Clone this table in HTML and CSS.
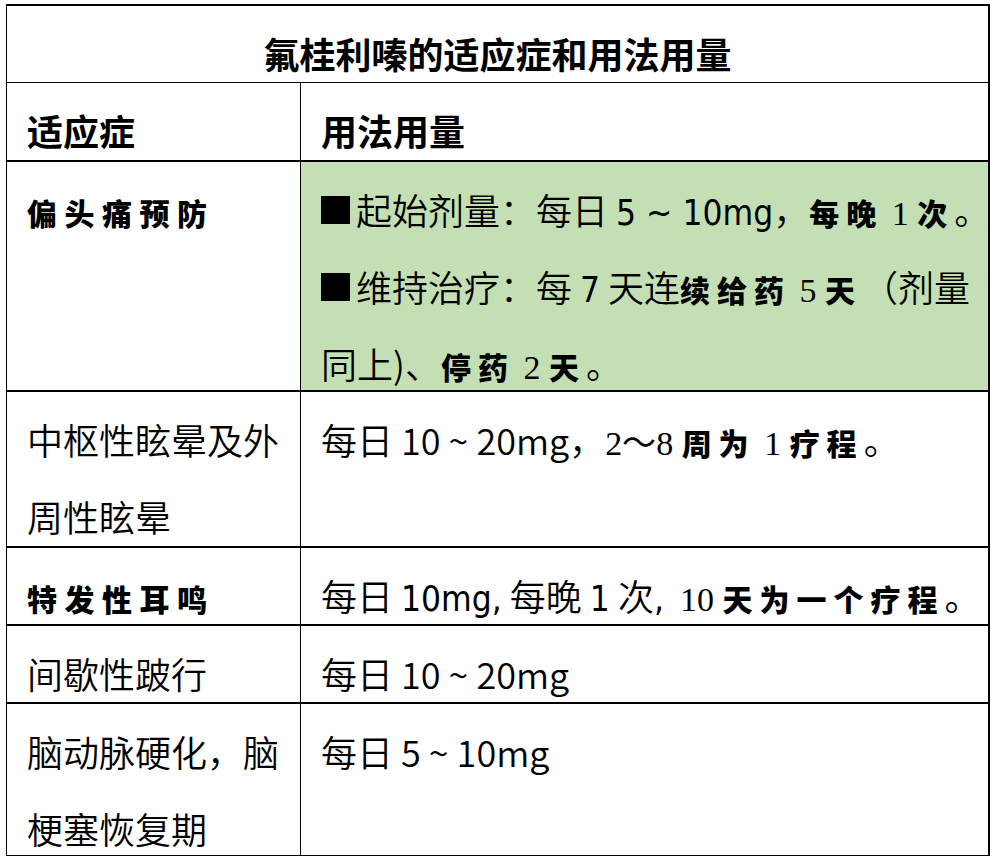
FILE: index.html
```html
<!DOCTYPE html>
<html lang="zh-CN">
<head>
<meta charset="utf-8">
<title>氟桂利嗪的适应症和用法用量</title>
<link rel="stylesheet" href="styles.css">
</head>
<body>
<div class="sheet">
  <div class="cell title">氟桂利嗪的适应症和用法用量</div>

  <div class="cell head left">适应症</div>
  <div class="cell head right">用法用量</div>

  <div class="cell left row1"><span class="bk">偏头痛预防</span></div>
  <div class="cell right row1 green">
    <span class="sq"></span>起始剂量：每日 <span class="nar">5 ~ 10mg</span>，<span class="bk">每晚</span><span class="sf"> 1 </span><span class="bk">次</span>。<br>
    <span class="sq"></span>维持治疗：每 <span class="nar">7</span> 天连<span class="bk">续给药</span><span class="sf"> 5 </span><span class="bk">天</span>（剂量<br>
    同上)、<span class="bk">停药</span><span class="sf"> 2 </span><span class="bk">天</span>。
  </div>

  <div class="cell left row2">中枢性眩晕及外<br>周性眩晕</div>
  <div class="cell right row2">每日 10 ~ 20mg，<span class="sf">2～8 </span><span class="bk">周为</span><span class="sf"> 1 </span><span class="bk">疗程</span>。</div>

  <div class="cell left row3"><span class="bk">特发性耳鸣</span></div>
  <div class="cell right row3">每日 <span class="nar">10mg,</span> 每晚 <span class="nar">1</span> 次<span class="nar">,</span>&nbsp; <span class="sf">10 </span><span class="bk">天为一个疗程</span>。</div>

  <div class="cell left row4">间歇性跛行</div>
  <div class="cell right row4">每日 10 ~ 20mg</div>

  <div class="cell left row5 last">脑动脉硬化，脑<br>梗塞恢复期</div>
  <div class="cell right row5 last">每日 5 ~ 10mg</div>
</div>
</body>
</html>
```
FILE: styles.css
```css
html, body {
  margin: 0;
  padding: 0;
  background: #ffffff;
}

body {
  font-family: "Noto Sans CJK SC", "Noto Sans", sans-serif;
  color: #000;
}

.sheet {
  display: grid;
  grid-template-columns: 294px 687px;
  grid-template-rows: 77px 79px 230px 156px 78px 78px 152px;
  width: max-content;
  margin: 4px 0 0 6px;
  border-top: 2px solid #000;
  border-left: 1px solid #000;
  border-right: 2px solid #000;
}

.cell {
  box-sizing: border-box;
  padding: 9px 0 0 20px;
  font-size: 36px;
  font-weight: 350;
  line-height: 77px;
  white-space: nowrap;
  border-bottom: 2px solid #000;
  overflow: visible;
}

.left {
  border-right: 1px solid #000;
}

.title {
  grid-column: 1 / 3;
  text-align: center;
  padding-left: 0;
  font-weight: 700;
  border-bottom-width: 1px;
}

.head {
  font-weight: 700;
}

.green {
  background: #c5dfb4;
}

.last {
  border-bottom-width: 1px;
}

.sq {
  display: inline-block;
  width: 29px;
  height: 28px;
  background: #000;
  margin-right: 6px;
  vertical-align: 1px;
}

.bk,
.sf,
.nar {
  line-height: 1;
}

.bk {
  font-size: 30px;
  font-weight: 900;
  letter-spacing: 7px;
}

.left .bk {
  letter-spacing: 7.5px;
}

.sf {
  font-family: "Liberation Serif", serif;
  font-size: 34px;
}

.nar {
  font-family: "Liberation Sans Narrow", "DejaVu Sans Condensed", "Liberation Sans", sans-serif;
  font-size: 35px;
}
```
